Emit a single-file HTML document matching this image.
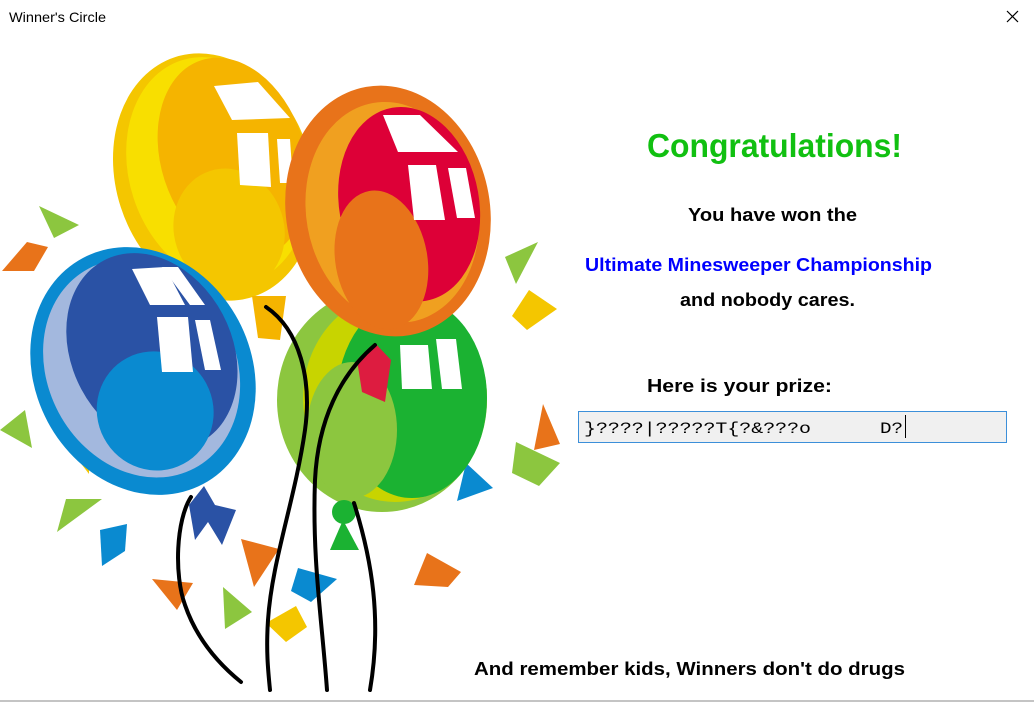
<!DOCTYPE html>
<html><head><meta charset="utf-8"><style>
html,body{margin:0;padding:0;background:#fff;width:1034px;height:702px;overflow:hidden}
svg{display:block}
</style></head><body>
<svg width="1034" height="702" viewBox="0 0 1034 702" xmlns="http://www.w3.org/2000/svg">
<rect width="1034" height="702" fill="#fff"/>
<text x="9" y="22" font-family="Liberation Sans, sans-serif" font-size="14" fill="#000" textLength="97" lengthAdjust="spacingAndGlyphs">Winner's Circle</text>
<path d="M1007 11 L1018 22 M1018 11 L1007 22" stroke="#000" stroke-width="1.2"/>
<line x1="0" y1="701" x2="1034" y2="701" stroke="#888" stroke-width="1"/>

<!-- confetti -->
<polygon points="39,206 79,225 54,238" fill="#8cc63f"/>
<polygon points="2,271 27,242 48,247 34,271" fill="#e8731a"/>
<polygon points="0,430 25,410 32,448" fill="#8cc63f"/>
<polygon points="57,432 89,417 89,474" fill="#f4c600"/>
<polygon points="57,532 66,499 102,499" fill="#8cc63f"/>
<polygon points="100,530 127,524 125,551 102,566" fill="#0a8ad0"/>
<polygon points="152,579 193,583 177,610" fill="#e8731a"/>
<polygon points="241,539 279,549 254,587" fill="#e8731a"/>
<polygon points="223,587 252,612 225,629" fill="#8cc63f"/>
<polygon points="298,568 337,579 311,602 291,591" fill="#0a8ad0"/>
<polygon points="266,623 296,606 307,627 286,642" fill="#f4c600"/>
<polygon points="427,553 461,572 448,587 414,585" fill="#e8731a"/>
<polygon points="505,257 538,242 516,284" fill="#8cc63f"/>
<polygon points="529,290 557,309 527,330 512,316" fill="#f4c600"/>
<polygon points="543,404 560,444 534,450" fill="#e8731a"/>
<polygon points="516,442 560,463 539,486 512,473" fill="#8cc63f"/>
<polygon points="466,463 493,488 457,501" fill="#0a8ad0"/>

<!-- yellow balloon -->
<g transform="rotate(-18 214 177)">
<ellipse cx="214" cy="177" rx="98" ry="126" fill="#f4c600"/>
<ellipse cx="219" cy="172" rx="88" ry="116" fill="#f8df00"/>
<ellipse cx="238" cy="165" rx="72" ry="103" fill="#f5b400"/>
<ellipse cx="212" cy="232" rx="55" ry="62" fill="#f4c600"/>
</g>
<polygon points="214,86 258,82 290,118 232,120" fill="#fff"/>
<polygon points="237,133 268,133 271,187 240,185" fill="#fff"/>
<polygon points="277,139 290,139 293,183 280,183" fill="#fff"/>
<polygon points="252,296 286,296 280,340 258,338" fill="#f5b400"/>

<!-- blue balloon -->
<g transform="rotate(-28 143 371)">
<ellipse cx="143" cy="371" rx="108" ry="128" fill="#0a8ad0"/>
<ellipse cx="143" cy="368" rx="94" ry="113" fill="#a3b8de"/>
<ellipse cx="160" cy="358" rx="80" ry="103" fill="#2a52a5"/>
<ellipse cx="135" cy="412" rx="58" ry="60" fill="#0a8ad0"/>
</g>
<polygon points="132,269 165,267 185,305 150,305" fill="#fff"/>
<polygon points="162,267 178,267 205,305 190,305" fill="#fff"/>
<polygon points="157,317 188,317 193,372 162,372" fill="#fff"/>
<polygon points="195,320 210,320 221,370 205,370" fill="#fff"/>

<!-- green balloon -->
<ellipse cx="382" cy="400" rx="105" ry="112" fill="#8cc63f"/>
<ellipse cx="395" cy="398" rx="92" ry="104" fill="#c8d400"/>
<ellipse cx="412" cy="398" rx="75" ry="100" fill="#1bb232"/>
<ellipse cx="352" cy="430" rx="45" ry="68" fill="#8cc63f"/>
<polygon points="400,345 428,345 432,389 402,389" fill="#fff"/>
<polygon points="436,339 456,339 462,389 442,389" fill="#fff"/>

<!-- orange balloon -->
<g transform="rotate(-10 388 211)">
<ellipse cx="388" cy="211" rx="102" ry="126" fill="#e8731a"/>
<ellipse cx="392" cy="213" rx="86" ry="111" fill="#f0a020"/>
<ellipse cx="410" cy="208" rx="70" ry="98" fill="#dd0037"/>
<ellipse cx="373" cy="258" rx="46" ry="70" fill="#e8731a"/>
</g>
<polygon points="383,115 420,115 458,152 398,152" fill="#fff"/>
<polygon points="408,165 436,165 445,220 414,220" fill="#fff"/>
<polygon points="448,168 466,168 475,218 457,218" fill="#fff"/>

<!-- bows -->
<path d="M357 360 L375 343 L391 360 L385 402 L362 392 Z" fill="#dd1c40"/>
<path d="M189 505 L204 486 L215 505 L236 510 L222 545 L208 522 L195 540 Z" fill="#2a52a5"/>
<path d="M330 550 L343 520 L359 550 Z" fill="#1bb232"/>
<circle cx="344" cy="512" r="12" fill="#1bb232"/>

<!-- strings -->
<g fill="none" stroke="#000" stroke-width="4" stroke-linecap="round">
<path d="M191 497 C176 520 174 575 185 605 C197 640 220 665 241 682"/>
<path d="M266 307 C300 330 312 380 305 430 C295 500 272 560 268 620 C266 650 268 670 270 690"/>
<path d="M375 345 C340 375 318 420 315 480 C312 560 322 620 327 690"/>
<path d="M354 503 C372 560 382 620 370 690"/>
</g>

<!-- text -->
<g font-family="Liberation Sans, sans-serif" font-weight="bold">
<text x="647" y="157" font-size="33" fill="#11c011" textLength="255" lengthAdjust="spacingAndGlyphs">Congratulations!</text>
<text x="688" y="221" font-size="18" fill="#000" textLength="169" lengthAdjust="spacingAndGlyphs">You have won the</text>
<text x="585" y="271" font-size="18" fill="#0000ff" textLength="347" lengthAdjust="spacingAndGlyphs">Ultimate Minesweeper Championship</text>
<text x="680" y="306" font-size="18" fill="#000" textLength="175" lengthAdjust="spacingAndGlyphs">and nobody cares.</text>
<text x="647" y="392" font-size="18" fill="#000" textLength="185" lengthAdjust="spacingAndGlyphs">Here is your prize:</text>
<text x="474" y="675" font-size="18" fill="#000" textLength="431" lengthAdjust="spacingAndGlyphs">And remember kids, Winners don't do drugs</text>
</g>

<rect x="578.5" y="411.5" width="428" height="31" fill="#f0f0f0" stroke="#3c8fd9" stroke-width="1"/>
<text x="584" y="433" font-family="Liberation Mono, monospace" font-size="16" fill="#000" textLength="227" lengthAdjust="spacingAndGlyphs">}????|?????T{?&amp;???o</text>
<text x="880" y="433" font-family="Liberation Mono, monospace" font-size="16" fill="#000" textLength="23" lengthAdjust="spacingAndGlyphs">D?</text>
<line x1="905.5" y1="415" x2="905.5" y2="438" stroke="#000"/>
</svg>
</body></html>
